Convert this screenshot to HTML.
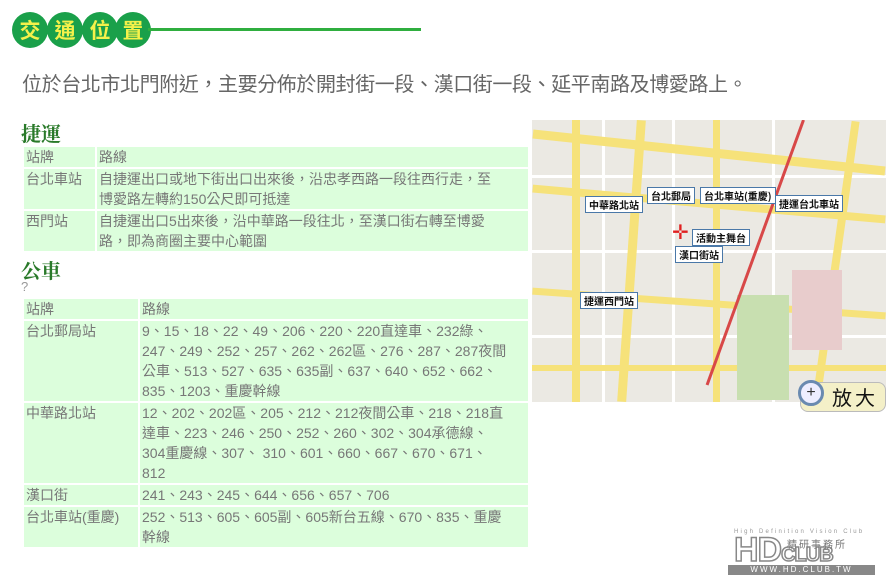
<!DOCTYPE html>
<html><head><meta charset="utf-8"><style>
*{margin:0;padding:0;box-sizing:border-box}
body{width:886px;height:579px;background:#fff;position:relative;overflow:hidden;font-family:"Liberation Sans","Noto Sans CJK TC",sans-serif;color:#666}
.c{position:absolute;top:12px;width:36px;height:36px;border-radius:50%;background:#1aa04a;color:#f4f14a;font-weight:bold;font-size:21px;line-height:36px;text-align:center;font-family:"Noto Sans CJK TC",sans-serif}
.line{position:absolute;left:148px;top:28px;width:273px;height:3px;background:#2fae3f}
.intro{position:absolute;left:22px;top:68px;font-size:20px;color:#666;white-space:nowrap;letter-spacing:-0.4px}
h3{position:absolute;left:21px;font-size:20px;color:#2a7a2a;font-family:"Noto Serif CJK SC",serif;font-weight:bold}
table{position:absolute;left:22px;border-collapse:separate;border-spacing:2px;font-size:14px;color:#777}
td{background:#dcfedc;vertical-align:top;line-height:20px;padding:0 2px;white-space:nowrap}
.map{position:absolute;left:532px;top:120px;width:354px;height:282px;background:#ebe9e3;overflow:hidden}
.r{position:absolute;background:#f6e27a}
.w{position:absolute;background:#fff}
.lbl{position:absolute;background:#fff;border:1px solid #4a78a8;font-size:10px;font-weight:bold;color:#111;padding:1px 3px;white-space:nowrap;font-family:"Noto Sans CJK TC",sans-serif;line-height:13px}
</style></head><body>
<div class="c" style="left:12px">交</div>
<div class="c" style="left:47px">通</div>
<div class="c" style="left:82px">位</div>
<div class="c" style="left:115px">置</div>
<div class="line"></div>
<div class="intro">位於台北市北門附近，主要分佈於開封街一段、漢口街一段、延平南路及博愛路上。</div>
<h3 style="top:118px">捷運</h3>
<table style="top:145px;width:508px">
<tr><td style="width:71px">站牌</td><td>路線</td></tr>
<tr><td>台北車站</td><td>自捷運出口或地下街出口出來後，沿忠孝西路一段往西行走，至<br>博愛路左轉約150公尺即可抵達</td></tr>
<tr><td>西門站</td><td>自捷運出口5出來後，沿中華路一段往北，至漢口街右轉至博愛<br>路，即為商圈主要中心範圍</td></tr>
</table>
<h3 style="top:255px">公車</h3>
<div style="position:absolute;left:21px;top:279px;font-size:13px;color:#999">?</div>
<table style="top:297px;width:508px">
<tr><td style="width:114px">站牌</td><td>路線</td></tr>
<tr><td>台北郵局站</td><td>9、15、18、22、49、206、220、220直達車、232綠、<br>247、249、252、257、262、262區、276、287、287夜間<br>公車、513、527、635、635副、637、640、652、662、<br>835、1203、重慶幹線</td></tr>
<tr><td>中華路北站</td><td>12、202、202區、205、212、212夜間公車、218、218直<br>達車、223、246、250、252、260、302、304承德線、<br>304重慶線、307、 310、601、660、667、670、671、<br>812</td></tr>
<tr><td>漢口街</td><td>241、243、245、644、656、657、706</td></tr>
<tr><td>台北車站(重慶)</td><td>252、513、605、605副、605新台五線、670、835、重慶<br>幹線</td></tr>
</table>
<div class="map">
<div class="w" style="left:0;top:55px;width:354px;height:3px"></div>
<div class="w" style="left:0;top:130px;width:354px;height:3px"></div>
<div class="w" style="left:0;top:215px;width:354px;height:3px"></div>
<div class="w" style="left:70px;top:0;width:3px;height:282px"></div>
<div class="w" style="left:140px;top:0;width:3px;height:282px"></div>
<div class="w" style="left:240px;top:0;width:3px;height:282px"></div>
<div class="r" style="left:0;top:28px;width:354px;height:9px;transform:rotate(6deg)"></div>
<div class="r" style="left:0;top:80px;width:354px;height:8px;transform:rotate(5deg)"></div>
<div class="r" style="left:0;top:180px;width:354px;height:7px;transform:rotate(4deg)"></div>
<div class="r" style="left:0;top:245px;width:354px;height:6px"></div>
<div class="r" style="left:40px;top:0;width:8px;height:282px"></div>
<div class="r" style="left:95px;top:0;width:9px;height:282px;transform:rotate(4deg)"></div>
<div class="r" style="left:181px;top:0;width:7px;height:282px"></div>
<div class="r" style="left:300px;top:0;width:8px;height:282px;transform:rotate(8deg)"></div>
<div style="position:absolute;left:205px;top:175px;width:52px;height:105px;background:#c8dfb0"></div>
<div style="position:absolute;left:260px;top:150px;width:50px;height:80px;background:#e8cccc"></div>
<div style="position:absolute;left:270px;top:0;width:3px;height:282px;background:#d84848;transform:rotate(20deg);transform-origin:top"></div>
<div class="lbl" style="left:53px;top:76px">中華路北站</div>
<div class="lbl" style="left:115px;top:67px">台北郵局</div>
<div class="lbl" style="left:168px;top:67px">台北車站(重慶)</div>
<div class="lbl" style="left:243px;top:75px">捷運台北車站</div>
<div class="lbl" style="left:160px;top:109px">活動主舞台</div>
<div class="lbl" style="left:143px;top:126px">漢口街站</div>
<div class="lbl" style="left:48px;top:172px">捷運西門站</div>
<div style="position:absolute;left:140px;top:103px;color:#e02020;font-size:20px;line-height:20px">✛</div>
</div>
<div style="position:absolute;left:800px;top:382px;width:86px;height:30px;background:#f4f0c8;border-radius:8px;border:1px solid #bbb"></div>
<div style="position:absolute;left:798px;top:380px;width:26px;height:26px;border-radius:50%;border:3px solid #6a8ab0;background:#eef;font-size:16px;line-height:20px;text-align:center;color:#333">+</div>
<div style="position:absolute;left:832px;top:385px;font-size:20px;color:#111;letter-spacing:3px;font-family:'Noto Sans CJK TC',sans-serif;line-height:24px">放大</div>
<div style="position:absolute;left:734px;top:529px;font-size:6px;color:#999;letter-spacing:2.2px">High Definition Vision Club</div>
<div style="position:absolute;left:734px;top:535px;font-size:34px;font-weight:bold;color:#fff;-webkit-text-stroke:1.5px #888;line-height:30px;letter-spacing:-1px">HD<span style="font-size:20px">CLUB</span></div>
<div style="position:absolute;left:787px;top:536px;font-size:10px;color:#777;letter-spacing:2px">精研事務所</div>
<div style="position:absolute;left:728px;top:565px;width:147px;height:10px;background:#888;color:#fff;font-size:8px;line-height:10px;text-align:center;letter-spacing:2px">WWW.HD.CLUB.TW</div>
</body></html>
